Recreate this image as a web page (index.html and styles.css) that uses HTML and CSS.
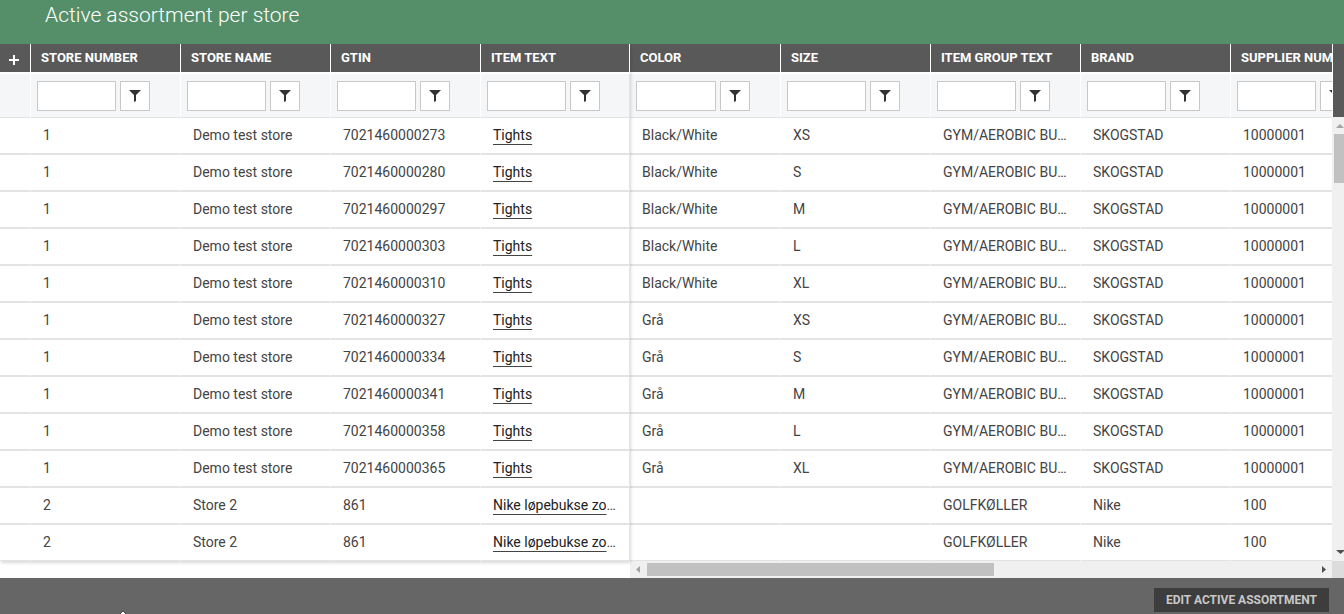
FILE: index.html
```
<!DOCTYPE html>
<html lang="en">
<head>
<meta charset="utf-8">
<title>Active assortment per store</title>
<link rel="stylesheet" href="styles.css">
</head>
<body>
<div class="page">
  <header class="title-bar"><h1 class="title">Active assortment per store</h1></header>
  <main class="grid">
    <div class="frozen-pane">
      <table class="table table-frozen" id="frozen"></table>
    </div>
    <div class="scroll-pane">
      <div class="scroll-view">
        <table class="table table-scroll" id="scrolling"></table>
      </div>
      <div class="hbar">
        <svg class="arrow arrow-muted" viewBox="0 0 17 17"><path d="M10 5v7L6 8.500z"/></svg>
        <div class="hbar-track"><div class="hbar-thumb"></div></div>
        <svg class="arrow" viewBox="0 0 17 17"><path d="M7 5v7l4-3.500z"/></svg>
      </div>
    </div>
    <div class="vbar">
      <div class="vbar-head"></div>
      <svg class="arrow arrow-muted" viewBox="0 0 17 17"><path d="M4 11h8L8 7z"/></svg>
      <div class="vbar-track"><div class="vbar-thumb"></div></div>
      <svg class="arrow" viewBox="0 0 17 17"><path d="M4 6h9l-4.500 4z"/></svg>
      <div class="corner"></div>
    </div>
  </main>
  <footer class="footer">
    <button class="edit-button" type="button">EDIT ACTIVE ASSORTMENT</button>
    <svg class="pointer" viewBox="0 0 6 3"><path d="M0 3 3 0l3 3z" fill="#222"/><path d="M2 1h2v1h1v1H1V2h1z" fill="#fff"/></svg>
  </footer>
</div>
<script src="grid.js"></script>
</body>
</html>
```

FILE: styles.css
```
* {
  box-sizing: border-box;
}

body {
  margin: 0;
  font-family: Roboto, "Liberation Sans", sans-serif;
  font-size: 14px;
  color: #444;
  background: #fff;
}

.page {
  display: flex;
  flex-direction: column;
  min-height: 100vh;
  overflow: hidden;
}

.title-bar {
  height: 44px;
  padding: 2px 45px;
  background: #558f69;
}

.title {
  margin: 0;
  font-size: 21px;
  line-height: 26px;
  font-weight: 300;
  color: #fff;
}

.grid {
  display: flex;
  flex: 1;
}

.frozen-pane {
  position: relative;
  z-index: 1;
  flex: none;
  align-self: flex-start;
  background: #fff;
  box-shadow: 1px 2px 3px rgba(0, 0, 0, 0.15);
}

.scroll-pane {
  flex: 1;
  min-width: 0;
}

.scroll-view {
  overflow: hidden;
}

.table {
  table-layout: fixed;
  border-collapse: separate;
  border-spacing: 0;
}

.table-frozen {
  width: 630px;
}

.table-scroll {
  width: 751px;
}

.col-add {
  width: 31px;
}

.col-first {
  width: 151px;
}

.col {
  width: 150px;
}

.col-last {
  width: 149px;
}

.head-cell {
  height: 30px;
  padding: 0 0 0 10px;
  border-right: 1px solid #fff;
  border-bottom: 2px solid #fff;
  background: #595959;
  color: #fff;
  font-size: 13px;
  line-height: 28px;
  font-weight: 700;
  text-align: left;
  white-space: nowrap;
}

.head-add {
  padding: 0;
}

.add-button {
  display: flex;
  align-items: center;
  justify-content: center;
  width: 28px;
  height: 28px;
  padding: 4px 0 0;
  border: 0;
  background: none;
}

.add-icon {
  width: 10px;
  height: 10px;
  fill: #fff;
}

.filter-cell {
  height: 44px;
  padding: 0 0 0 6px;
  border-right: 1px solid #fff;
  border-bottom: 1px solid #e2e2e2;
  background: #f4f6f8;
}

.filter {
  display: flex;
  gap: 4px;
}

.filter-input {
  width: 79px;
  height: 30px;
  padding: 0 6px;
  border: 1px solid #c8c8c8;
  background: #fff;
  font: inherit;
}

.table-scroll .filter-cell:first-child .filter-input {
  width: 80px;
}

.filter-button {
  display: flex;
  align-items: center;
  justify-content: center;
  flex: none;
  width: 30px;
  height: 30px;
  padding: 0;
  border: 1px solid #c8c8c8;
  background: #fff;
}

.filter-icon {
  width: 12px;
  height: 14px;
  fill: #333;
}

.cell {
  height: 37px;
  padding: 0 12px;
  border-right: 1px solid #fff;
  border-bottom: 2px solid #e3e3e3;
  line-height: 35px;
  overflow: hidden;
  text-overflow: ellipsis;
  white-space: nowrap;
}

.table-frozen .filter-cell:last-child,
.table-frozen .cell:last-child {
  border-right-color: #e3e3e3;
}

.row:last-child .cell {
  height: 36px;
  border-bottom-width: 1px;
}

.item-link {
  color: #222;
  text-decoration: underline;
  text-decoration-color: #444;
  text-decoration-thickness: 1px;
  text-decoration-skip-ink: none;
  text-underline-offset: 4px;
}

.hbar {
  display: flex;
  height: 17px;
  background: #f0f0f0;
}

.hbar-track {
  flex: 1;
  padding: 2px 0;
}

.hbar-thumb {
  width: 52%;
  height: 13px;
  background: #c1c1c1;
}

.vbar {
  display: flex;
  flex-direction: column;
  flex: none;
  width: 12px;
  overflow: hidden;
  background: #f0f0f0;
}

.vbar-head {
  height: 73px;
  border-left: 1px solid #fff;
  background: #595959;
}

.vbar-track {
  flex: 1;
  padding-left: 2px;
}

.vbar-thumb {
  height: 49px;
  background: #c1c1c1;
}

.corner {
  height: 17px;
  background: #dcdcdc;
}

.arrow {
  flex: none;
  width: 17px;
  height: 17px;
  fill: #505050;
}

.arrow-muted {
  fill: #a3a3a3;
}

.footer {
  position: relative;
  display: flex;
  justify-content: flex-end;
  height: 36px;
  padding: 10px 15px 2px;
  background: #666;
}

.edit-button {
  height: 24px;
  padding: 0 12px;
  border: 0;
  background: #3d3d3d;
  color: #c8c8c8;
  font-family: inherit;
  font-size: 12px;
  font-weight: 700;
}

.pointer {
  position: absolute;
  bottom: 0;
  left: 120px;
  width: 6px;
  height: 3px;
}
```

FILE: grid.js
```
const group = "GYM/AEROBIC BUKSER";
const variants = [
  ["7021460000273", "Black/White", "XS"],
  ["7021460000280", "Black/White", "S"],
  ["7021460000297", "Black/White", "M"],
  ["7021460000303", "Black/White", "L"],
  ["7021460000310", "Black/White", "XL"],
  ["7021460000327", "Grå", "XS"],
  ["7021460000334", "Grå", "S"],
  ["7021460000341", "Grå", "M"],
  ["7021460000358", "Grå", "L"],
  ["7021460000365", "Grå", "XL"]
];
const rows = variants.map(([gtin, color, size]) =>
  ["1", "Demo test store", gtin, "Tights", color, size, group, "SKOGSTAD", "10000001"]);
for (let i = 0; i < 2; i++) {
  rows.push(["2", "Store 2", "861", "Nike løpebukse zone", "", "", "GOLFKØLLER", "Nike", "100"]);
}

const frozenHeads = ["STORE NUMBER", "STORE NAME", "GTIN", "ITEM TEXT"];
const scrollHeads = ["COLOR", "SIZE", "ITEM GROUP TEXT", "BRAND", "SUPPLIER NUMBER"];

const addHead = `<th class="head-cell head-add"><button class="add-button" type="button" aria-label="Add column">
  <svg class="add-icon" viewBox="0 0 10 10"><path d="M4 0h2v4h4v2H6v4H4V6H0V4h4z"/></svg></button></th>`;

const head = text => `<th class="head-cell" scope="col">${text}</th>`;

const filter = text => `<td class="filter-cell"><div class="filter">
  <input class="filter-input" type="text" aria-label="Filter ${text}">
  <button class="filter-button" type="button" aria-label="Filter options ${text}">
  <svg class="filter-icon" viewBox="0 0 12 14"><path d="M0 1h12L7 6v6l-2 1V6z"/></svg></button></div></td>`;

const cell = text => `<td class="cell">${text}</td>`;
const link = text => `<a class="item-link" href="#">${text}</a>`;

const row = cells => `<tr class="row">${cells.join("")}</tr>`;

document.getElementById("frozen").innerHTML = `
  <colgroup><col class="col-add"><col class="col"><col class="col"><col class="col"><col class="col-last"></colgroup>
  <thead><tr>${addHead}${frozenHeads.map(head).join("")}</tr>
  <tr><td class="filter-cell"></td>${frozenHeads.map(filter).join("")}</tr></thead>
  <tbody>${rows.map(r => row([cell(""), cell(r[0]), cell(r[1]), cell(r[2]), cell(link(r[3]))])).join("")}</tbody>`;

document.getElementById("scrolling").innerHTML = `
  <colgroup><col class="col-first"><col class="col"><col class="col"><col class="col"><col class="col"></colgroup>
  <thead><tr>${scrollHeads.map(head).join("")}</tr>
  <tr>${scrollHeads.map(filter).join("")}</tr></thead>
  <tbody>${rows.map(r => row(r.slice(4).map(cell))).join("")}</tbody>`;
```
